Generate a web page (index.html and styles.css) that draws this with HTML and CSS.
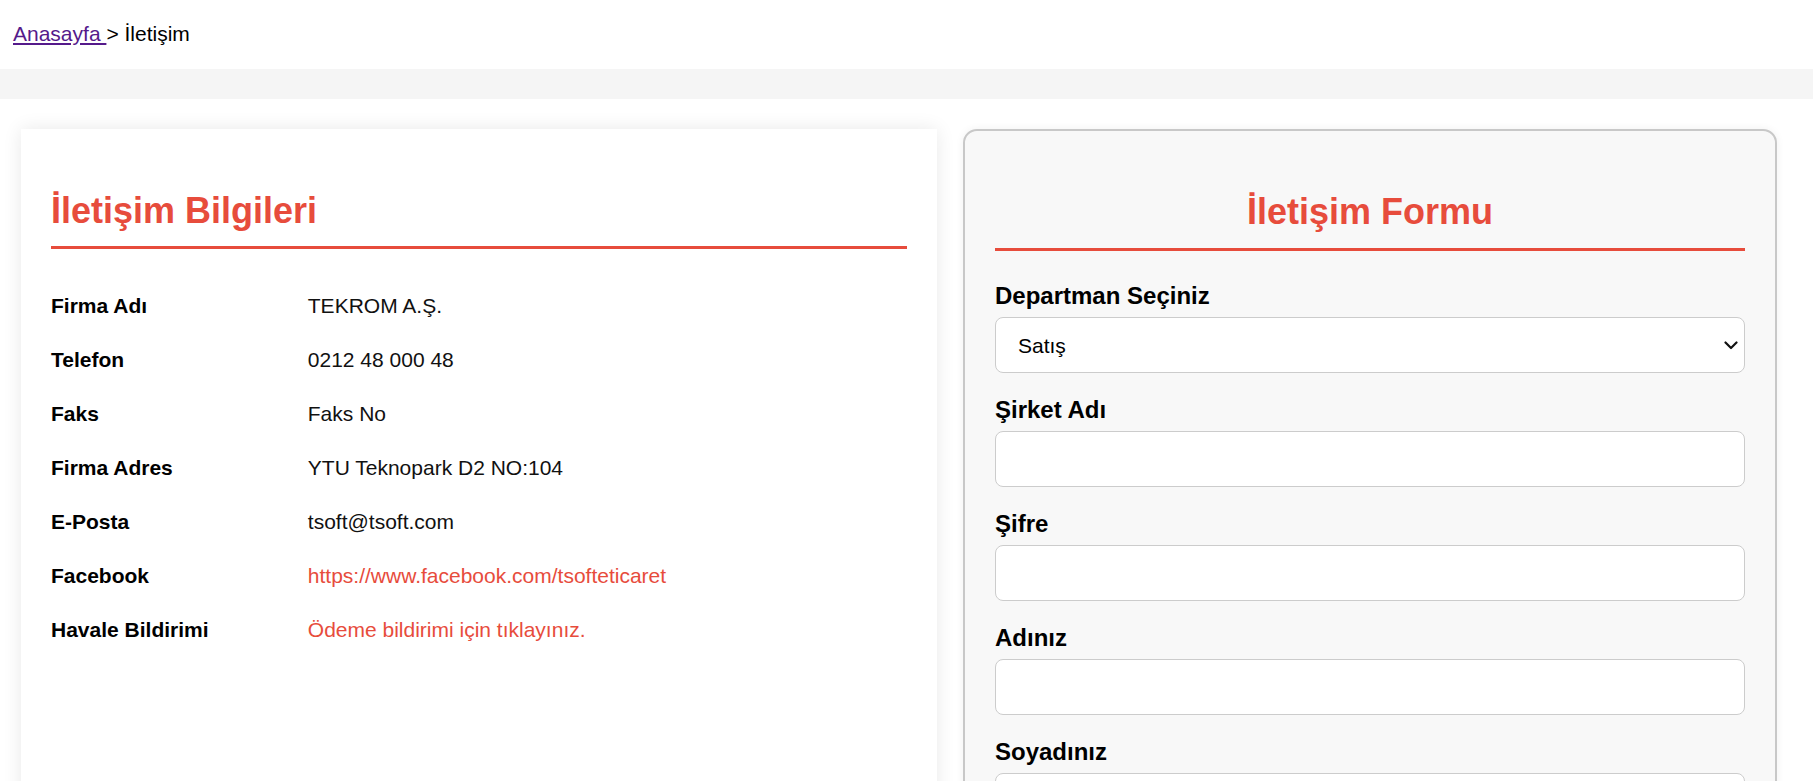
FILE: index.html
```html
<!DOCTYPE html>
<html lang="tr">
<head>
<meta charset="utf-8">
<title>İletişim</title>
<link rel="stylesheet" href="styles.css">
</head>
<body>
<div class="breadcrumb"><a href="#" class="crumb-link">Anasayfa </a>&gt; İletişim</div>
<div class="band"></div>
<main class="content">
  <section class="info-card">
    <h2 class="card-title">İletişim Bilgileri</h2>
    <div class="info-list">
      <div class="info-row"><span class="info-label">Firma Adı</span><span class="info-value">TEKROM A.Ş.</span></div>
      <div class="info-row"><span class="info-label">Telefon</span><span class="info-value">0212 48 000 48</span></div>
      <div class="info-row"><span class="info-label">Faks</span><span class="info-value">Faks No</span></div>
      <div class="info-row"><span class="info-label">Firma Adres</span><span class="info-value">YTU Teknopark D2 NO:104</span></div>
      <div class="info-row"><span class="info-label">E-Posta</span><span class="info-value">tsoft@tsoft.com</span></div>
      <div class="info-row"><span class="info-label">Facebook</span><a class="info-link" href="#">https://www.facebook.com/tsofteticaret</a></div>
      <div class="info-row"><span class="info-label">Havale Bildirimi</span><a class="info-link" href="#">Ödeme bildirimi için tıklayınız.</a></div>
    </div>
  </section>
  <section class="form-card">
    <h2 class="card-title form-title">İletişim Formu</h2>
    <form class="contact-form">
      <label class="field-label" for="dep">Departman Seçiniz</label>
      <div class="select-wrap">
        <select class="field-input field-select" id="dep">
          <option>Satış</option>
          <option>Destek</option>
        </select>
        <svg class="select-arrow" width="14" height="9" viewBox="0 0 14 9" aria-hidden="true">
          <path d="M1.5 1.5 L7 7 L12.5 1.5" fill="none" stroke="#111" stroke-width="2.2" stroke-linecap="round" stroke-linejoin="round"/>
        </svg>
      </div>
      <label class="field-label" for="firma">Şirket Adı</label>
      <input class="field-input" id="firma" type="text">
      <label class="field-label" for="sifre">Şifre</label>
      <input class="field-input" id="sifre" type="password">
      <label class="field-label" for="ad">Adınız</label>
      <input class="field-input" id="ad" type="text">
      <label class="field-label" for="soyad">Soyadınız</label>
      <input class="field-input" id="soyad" type="text">
      <label class="field-label" for="mail">E-Posta</label>
      <input class="field-input" id="mail" type="email">
    </form>
  </section>
</main>
</body>
</html>
```

FILE: styles.css
```css
* { box-sizing: border-box; }

html, body {
  margin: 0;
  padding: 0;
  background: #ffffff;
  font-family: "Liberation Sans", Arial, sans-serif;
  color: #000;
}

.breadcrumb {
  padding: 22px 13px 23px;
  font-size: 21px;
  line-height: 24px;
  color: #000;
}

.crumb-link {
  color: #551a8b;
  text-decoration: underline;
}

.band {
  height: 30px;
  background: #f5f5f5;
}

.content {
  display: grid;
  grid-template-columns: 916fr 814fr;
  column-gap: 26px;
  padding: 30px 36px 40px 21px;
  align-items: start;
}

.info-card {
  background: #fff;
  box-shadow: 0 0 18px rgba(0, 0, 0, 0.09);
  padding: 61px 30px 40px;
  min-height: 760px;
}

.card-title {
  margin: 0;
  font-size: 36px;
  line-height: 41px;
  font-weight: bold;
  color: #e74c3c;
  padding-bottom: 15px;
  border-bottom: 3px solid #e74c3c;
}

.info-list {
  margin-top: 30px;
}

.info-row {
  display: grid;
  grid-template-columns: 30% 1fr;
  padding: 15px 0;
  font-size: 21px;
  line-height: 24px;
}

.info-label {
  font-weight: bold;
  color: #000;
}

.info-value {
  color: #111;
}

.info-link {
  color: #e74c3c;
  text-decoration: none;
}

.form-card {
  background: #f8f8f8;
  border: 2px solid #c8c8c8;
  border-radius: 14px;
  box-shadow: 0 0 8px rgba(0, 0, 0, 0.06);
  padding: 60px 30px 40px;
}

.form-title {
  text-align: center;
  padding-bottom: 16px;
}

.contact-form {
  display: flex;
  flex-direction: column;
  padding-top: 31px;
}

.field-label {
  display: block;
  font-size: 24px;
  line-height: 28px;
  font-weight: bold;
  color: #000;
  margin-bottom: 7px;
}

.field-input {
  display: block;
  width: 100%;
  height: 56px;
  border: 1px solid #cccccc;
  border-radius: 8px;
  background: #fff;
  font-family: "Liberation Sans", Arial, sans-serif;
  font-size: 20px;
  color: #000;
  padding: 0 20px;
  margin: 0 0 23px;
}

.select-wrap {
  position: relative;
}

.field-select {
  -webkit-appearance: none;
  appearance: none;
  padding: 0 40px 0 22px;
  font-size: 21px;
}

.select-arrow {
  position: absolute;
  right: 7px;
  top: 24px;
  pointer-events: none;
}
```
